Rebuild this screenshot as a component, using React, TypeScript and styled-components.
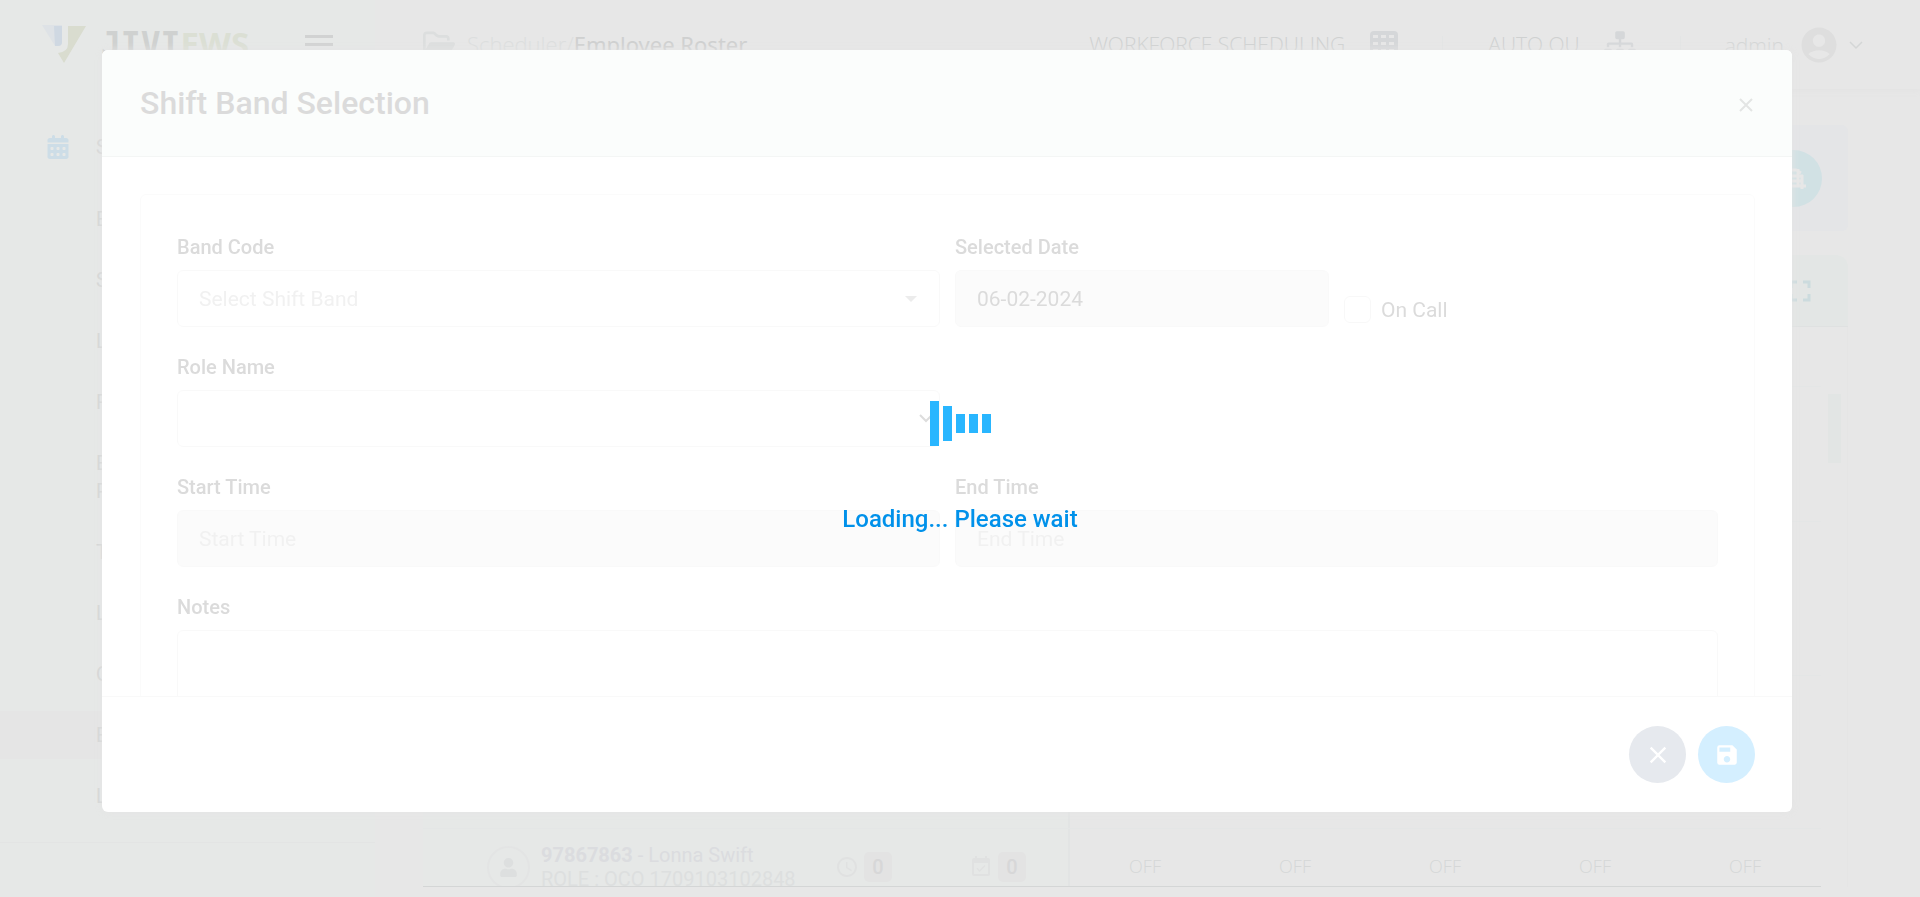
import React from "react";
import styled, { createGlobalStyle } from "styled-components";
import { FaSitemap, FaUser } from "react-icons/fa";
import { FaCalendarDays, FaRegFolderOpen } from "react-icons/fa6";
import { MdAccessTime, MdAccountCircle, MdClose, MdEventAvailable, MdFullscreen, MdSave } from "react-icons/md";

const GlobalStyle = createGlobalStyle`
  *, *::before, *::after { box-sizing: border-box; }
  body {
    margin: 0;
    background: #e7e7e7;
    color: #d6d6d6;
    font-family: Roboto, "Liberation Sans", sans-serif;
    font-size: 20px;
    line-height: 24px;
    overflow: hidden;
  }
  button, input, select, textarea { font: inherit; color: inherit; }
  button { border: 0; padding: 0; background: none; }
`;

const Page = styled.div`
  height: 100vh;
  display: flex;
  flex-direction: column;
  overflow: hidden;
`;

const TopBar = styled.header`
  display: flex;
  align-items: flex-start;
  flex: 0 0 89px;
  padding-right: 56px;
  background: linear-gradient(90deg, #e6e8e7 0 375px, #e7e7e7 375px);
  box-shadow: 0 2px 6px #e3e3e3;
  font-family: "Open Sans", "Noto Sans", sans-serif;
  font-size: 21px;
  font-weight: 300;
  line-height: 32px;
`;

const Brand = styled.a`
  display: flex;
  width: 305px;
  padding: 25px 0 0 42px;
  gap: 14px;
  color: #cfd1d0;
  text-decoration: none;
`;

const BrandName = styled.span`
  font-family: "DejaVu Sans Mono", monospace;
  font-size: 33px;
  font-weight: 700;
  line-height: 37px;
`;

const BrandTail = styled.span`
  color: #dbdfd4;
  font-family: "Noto Sans", sans-serif;
`;

const MenuButton = styled.button`
  display: flex;
  flex-direction: column;
  gap: 5px;
  width: 28px;
  margin: 35px 90px 0 0;
  span { height: 3px; background: #d1d2d2; }
`;

const Crumbs = styled.nav`
  display: flex;
  flex: 1;
  padding-top: 28px;
  gap: 12px;
  color: #d2d3d3;
  font-size: 22px;
  svg { color: #dcdede; }
  a { color: #dcdede; text-decoration: none; }
`;

const CrumbCurrent = styled.span`
  color: #cfd0d0;
  font-family: "Noto Sans", sans-serif;
  font-weight: 400;
`;

const TopGroup = styled.div<{ $end: number }>`
  display: flex;
  align-items: center;
  gap: 24px;
  padding-top: 28px;
  margin-right: ${(p) => p.$end}px;
  color: #cfd1d1;
  svg { color: #d5d7d9; }
`;

const Divider = styled.span<{ $end: number }>`
  width: 1px;
  height: 24px;
  margin: 36px ${(p) => p.$end}px 0 0;
  background: #e3e5e5;
`;

const Account = styled.button`
  display: flex;
  align-items: center;
  gap: 9px;
  padding-top: 24px;
  color: #d4d6d6;
`;

const AccountIcon = styled.span`
  display: flex;
  margin-left: 5px;
  color: #dedede;
`;

const Columns = styled.div`
  display: flex;
  flex: 1;
  min-height: 0;
`;

const Sidebar = styled.aside`
  display: flex;
  flex-direction: column;
  flex: 0 0 375px;
  padding-top: 34px;
  background: #e6e8e7;
  > * { flex-shrink: 0; }
`;

const MenuHead = styled.a`
  display: flex;
  align-items: center;
  height: 48px;
  margin-bottom: 24px;
  padding-left: 46px;
  gap: 26px;
  color: #d6d7d7;
  text-decoration: none;
  svg { color: #cddde7; }
`;

const MenuItem = styled.a<{ $active?: boolean }>`
  margin-bottom: 13px;
  padding: 10px 120px 10px 96px;
  background: ${(p) => (p.$active ? "#e5e5e5" : "transparent")};
  color: #d3d5d5;
  line-height: 28px;
  text-decoration: none;
`;

const SideFoot = styled.div`
  margin-top: 9px;
  border-top: 1px solid #e3e4e4;
`;

const Main = styled.main`
  display: flex;
  flex-direction: column;
  flex: 1;
  min-width: 0;
  padding: 36px 72px 0 48px;
`;

const Toolbar = styled.section`
  display: flex;
  align-items: center;
  justify-content: flex-end;
  height: 106px;
  margin-bottom: 24px;
  padding: 0 26px;
  border-radius: 6px;
  background: #e4e5e7;
`;

const RoundButton = styled.button<{ $color: string }>`
  display: grid;
  place-items: center;
  width: 57px;
  height: 57px;
  border-radius: 50%;
  background: ${(p) => p.$color};
  color: #ffffff;
`;

const Roster = styled.section`
  display: flex;
  flex-direction: column;
  flex: 1;
  min-height: 0;
`;

const RosterHead = styled.div`
  display: flex;
  align-items: center;
  justify-content: flex-end;
  flex: 0 0 72px;
  padding: 0 30px;
  border-bottom: 1px solid #dfe1e1;
  border-radius: 12px 12px 0 0;
  background: #e3e6e5;
  color: #ccdbde;
`;

const RosterBody = styled.div`
  display: flex;
  height: 560px;
  padding-right: 26px;
  border-right: 1px solid #e5e5e5;
`;

const Grid = styled.div`
  flex: 1;
  height: 560px;
  overflow: hidden;
  border-bottom: 1px solid #d4d6d6;
`;

const GridRow = styled.div<{ $height: number }>`
  display: flex;
  height: ${(p) => p.$height}px;
  border-bottom: 1px solid #e4e6e6;
`;

const PersonCell = styled.div`
  display: flex;
  flex: 0 0 647px;
  min-width: 0;
  padding-left: 64px;
  border-right: 2px solid #e2e4e4;
  background: #e6e8e7;
`;

const Avatar = styled.span`
  display: grid;
  place-items: center;
  flex: 0 0 43px;
  height: 43px;
  margin: 17px 11px 0 0;
  border: 2px solid #e3e4e4;
  border-radius: 50%;
  color: #dddfdf;
`;

const Person = styled.div`
  flex: 0 0 294px;
  padding-top: 14px;
  color: #dbdcdf;
  white-space: nowrap;
  p { margin: 0; }
`;

const PersonRole = styled.p`
  color: #dddfdf;
`;

const Counter = styled.div`
  display: flex;
  align-items: center;
  flex: 0 0 134px;
  height: 30px;
  margin-top: 23px;
  gap: 5px;
  color: #e0e1e1;
  &:last-child { flex: 1; }
`;

const Count = styled.span`
  width: 28px;
  border-radius: 5px;
  background: #e3e3e3;
  color: #d7d7d8;
  font-weight: 500;
  line-height: 30px;
  text-align: center;
`;

const DayCell = styled.div`
  flex: 0 0 150px;
  padding-top: 25px;
  color: #d5d7d7;
  font-family: "Open Sans", "Noto Sans", sans-serif;
  font-size: 18px;
  font-weight: 300;
  text-align: center;
`;

const Scroller = styled.div`
  width: 13px;
  height: 69px;
  margin: 67px -20px 0 7px;
  background: #e2e5e4;
`;

const ModalLayer = styled.div`
  position: fixed;
  inset: 0;
  padding: 50px 128px 0 102px;
`;

const Dialog = styled.form`
  display: flex;
  flex-direction: column;
  height: 85vh;
  border-radius: 6px;
  overflow: hidden;
  background: #ffffff;
  box-shadow: 0 0 8px #e4e4e4;
  color: #dbdbdb;
`;

const DialogHead = styled.div`
  display: flex;
  align-items: center;
  justify-content: space-between;
  flex: 0 0 107px;
  padding: 0 36px 0 38px;
  border-bottom: 1px solid #f4f6f5;
  background: #fbfdfc;
  h1 {
    margin: 0;
    font-size: 32px;
    font-weight: 500;
    line-height: 40px;
  }
  button { padding-top: 4px; }
`;

const DialogBody = styled.div`
  flex: 1;
  min-height: 0;
  padding: 37px 37px 0 38px;
  overflow: hidden;
`;

const Card = styled.div`
  display: grid;
  grid-template-columns: repeat(2, minmax(0, 1fr));
  gap: 24px 15px;
  padding: 36px;
  border: 1px solid #fbfbfb;
  border-radius: 6px;
`;

const Field = styled.div<{ $wide?: boolean }>`
  display: flex;
  flex-direction: column;
  gap: 7px;
  grid-column: ${(p) => (p.$wide ? "1 / -1" : "auto")};
  > label {
    font-weight: 500;
    line-height: 32px;
  }
`;

const Control = styled.div<{ $filled?: boolean; $tall?: boolean }>`
  display: flex;
  align-items: center;
  height: ${(p) => (p.$tall ? 140 : 57)}px;
  border: 1px solid #f9f9f9;
  border-radius: 6px;
  background: ${(p) => (p.$filled ? "#fbfbfb" : "#ffffff")};
  input, select, textarea {
    flex: 1;
    min-width: 0;
    height: 100%;
    padding: 0 21px;
    border: 0;
    outline: 0;
    appearance: none;
    resize: none;
    background: none;
    font-size: 21px;
  }
  select { color: #f1f1f1; }
  input::placeholder { color: #f1f1f1; opacity: 1; }
`;

const Caret = styled.svg`
  margin-right: 22px;
`;

const Chevron = styled.svg`
  margin-right: 6px;
`;

const Empty = styled.div``;

const DateRow = styled.div`
  display: grid;
  grid-template-columns: repeat(2, minmax(0, 1fr));
  align-items: end;
  gap: 15px;
`;

const Check = styled.label`
  display: flex;
  align-items: center;
  gap: 10px;
  padding-bottom: 4px;
  font-size: 21px;
  input {
    width: 27px;
    height: 27px;
    margin: 0;
    appearance: none;
    border: 1px solid #f8f8f8;
    border-radius: 6px;
  }
`;

const DialogFoot = styled.div`
  display: flex;
  justify-content: flex-end;
  flex: 0 0 116px;
  padding: 29px 37px;
  gap: 12px;
  border-top: 1px solid #f9f9f9;
`;

const LoadingLayer = styled.div`
  position: fixed;
  inset: 0;
  display: flex;
  flex-direction: column;
  align-items: center;
  padding-top: 400px;
  gap: 59px;
  color: #0091ea;
  font-size: 24px;
  font-weight: 500;
  line-height: 28px;
`;

const Bars = styled.div`
  display: flex;
  align-items: center;
  height: 46px;
  gap: 4px;
`;

const Bar = styled.span<{ $height: number }>`
  width: 9px;
  height: ${(p) => p.$height}px;
  background: #29b6ff;
`;

const menu = [
  "Employee Setup",
  "Shift Band",
  "Leave Band",
  "Role Setup",
  "Employee Shift Planning",
  "Time Sheet",
  "Leave Type",
  "On Call",
  "Employee Roster",
  "Leave Roster",
];

const days = [1, 2, 3, 4, 5];

function Logo() {
  return (
    <svg width="45" height="39" viewBox="0 0 45 39">
      <path d="M0 0h20v17q0 4-4 4h-3z" fill="#dee2e6" />
      <path d="M12 1h8v16q0 4-4 4h-3z" fill="#cfd8e2" />
      <path d="M26 1h18L22 38 16 28q10-1 10-9z" fill="#d9dccf" />
    </svg>
  );
}

function TableIcon() {
  return (
    <svg width="30" height="26" viewBox="0 0 30 26">
      <rect x="1" width="28" height="26" rx="4" fill="currentColor" />
      {[4, 11, 18].map((y) =>
        [4, 12, 20].map((x) => <rect key={`${x}-${y}`} x={x} y={y} width="5" height="3" fill="#e7e7e7" />)
      )}
    </svg>
  );
}

export default function App() {
  return (
    <>
      <GlobalStyle />
      <Page>
        <TopBar>
          <Brand href="#home">
            <Logo />
            <BrandName>JIVI<BrandTail>EWS</BrandTail></BrandName>
          </Brand>
          <MenuButton aria-label="Toggle menu"><span /><span /><span /></MenuButton>
          <Crumbs>
            <FaRegFolderOpen size={32} />
            <div>
              <a href="#scheduler">Scheduler/</a>
              <CrumbCurrent>Employee Roster</CrumbCurrent>
            </div>
          </Crumbs>
          <TopGroup $end={43}>WORKFORCE SCHEDULING<TableIcon /></TopGroup>
          <Divider $end={45} />
          <TopGroup $end={44}>AUTO OU<FaSitemap size={32} /></TopGroup>
          <Divider $end={44} />
          <Account>
            admin
            <AccountIcon><MdAccountCircle size={42} /></AccountIcon>
            <svg width="15" height="9" viewBox="0 0 15 9" fill="none" stroke="currentColor" strokeWidth="1.5">
              <path d="M1 1l6 6 6-6" />
            </svg>
          </Account>
        </TopBar>
        <Columns>
          <Sidebar>
            <MenuHead href="#scheduler"><FaCalendarDays size={24} />Scheduler</MenuHead>
            {menu.map((name) => (
              <MenuItem key={name} href="#item" $active={name === "Employee Roster"}>{name}</MenuItem>
            ))}
            <SideFoot />
          </Sidebar>
          <Main>
            <Toolbar>
              <RoundButton $color="#d1e1e4" aria-label="Assign">
                <svg width="28" height="24" viewBox="0 0 28 24" fill="none" stroke="#e7e7e7" strokeWidth="3">
                  <path d="M6 4h10l5 3M3 10h20M3 15h20M2 20h24M18 3v17M22 9v14" />
                </svg>
              </RoundButton>
            </Toolbar>
            <Roster>
              <RosterHead><MdFullscreen size={36} /></RosterHead>
              <RosterBody>
                <Grid>
                  <GridRow $height={60} />
                  <GridRow $height={135}><PersonCell /></GridRow>
                  <GridRow $height={154}><PersonCell /></GridRow>
                  <GridRow $height={153}><PersonCell /></GridRow>
                  <GridRow $height={153}>
                    <PersonCell>
                      <Avatar><FaUser size={19} /></Avatar>
                      <Person>
                        <p><b>97867863</b> - Lonna Swift</p>
                        <PersonRole>ROLE : OCO 1709103102848</PersonRole>
                      </Person>
                      <Counter><MdAccessTime size={24} /><Count>0</Count></Counter>
                      <Counter><MdEventAvailable size={24} /><Count>0</Count></Counter>
                    </PersonCell>
                    {days.map((day) => <DayCell key={day}>OFF</DayCell>)}
                  </GridRow>
                </Grid>
                <Scroller />
              </RosterBody>
            </Roster>
          </Main>
        </Columns>
      </Page>

      <ModalLayer>
        <Dialog role="dialog" aria-labelledby="dialog-title">
          <DialogHead>
            <h1 id="dialog-title">Shift Band Selection</h1>
            <button type="button" aria-label="Close">
              <svg width="20" height="14" viewBox="0 0 20 14" fill="none" stroke="#e3e5e4" strokeWidth="2">
                <path d="M4 1l12 12M16 1L4 13" />
              </svg>
            </button>
          </DialogHead>
          <DialogBody>
            <Card>
              <Field>
                <label htmlFor="band">Band Code</label>
                <Control>
                  <select id="band"><option>Select Shift Band</option></select>
                  <Caret width="12" height="6" viewBox="0 0 12 6"><path d="M0 0h12L6 6z" fill="#ececec" /></Caret>
                </Control>
              </Field>
              <DateRow>
                <Field>
                  <label htmlFor="date">Selected Date</label>
                  <Control $filled><input id="date" readOnly value="06-02-2024" /></Control>
                </Field>
                <Check><input type="checkbox" />On Call</Check>
              </DateRow>
              <Field>
                <label htmlFor="role">Role Name</label>
                <Control>
                  <select id="role" />
                  <Chevron width="14" height="9" viewBox="0 0 14 9" fill="none" stroke="#dddddd" strokeWidth="2">
                    <path d="M1 1l6 6 6-6" />
                  </Chevron>
                </Control>
              </Field>
              <Empty />
              <Field>
                <label htmlFor="start">Start Time</label>
                <Control $filled><input id="start" placeholder="Start Time" /></Control>
              </Field>
              <Field>
                <label htmlFor="end">End Time</label>
                <Control $filled><input id="end" placeholder="End Time" /></Control>
              </Field>
              <Field $wide>
                <label htmlFor="notes">Notes</label>
                <Control $tall><textarea id="notes" /></Control>
              </Field>
            </Card>
          </DialogBody>
          <DialogFoot>
            <RoundButton type="button" $color="#e6e9ee" aria-label="Cancel"><MdClose size={28} /></RoundButton>
            <RoundButton type="button" $color="#d4efff" aria-label="Save"><MdSave size={26} /></RoundButton>
          </DialogFoot>
        </Dialog>
      </ModalLayer>

      <LoadingLayer role="status">
        <Bars>
          {[45, 35, 19, 19, 19].map((height, i) => <Bar key={i} $height={height} />)}
        </Bars>
        Loading... Please wait
      </LoadingLayer>
    </>
  );
}
